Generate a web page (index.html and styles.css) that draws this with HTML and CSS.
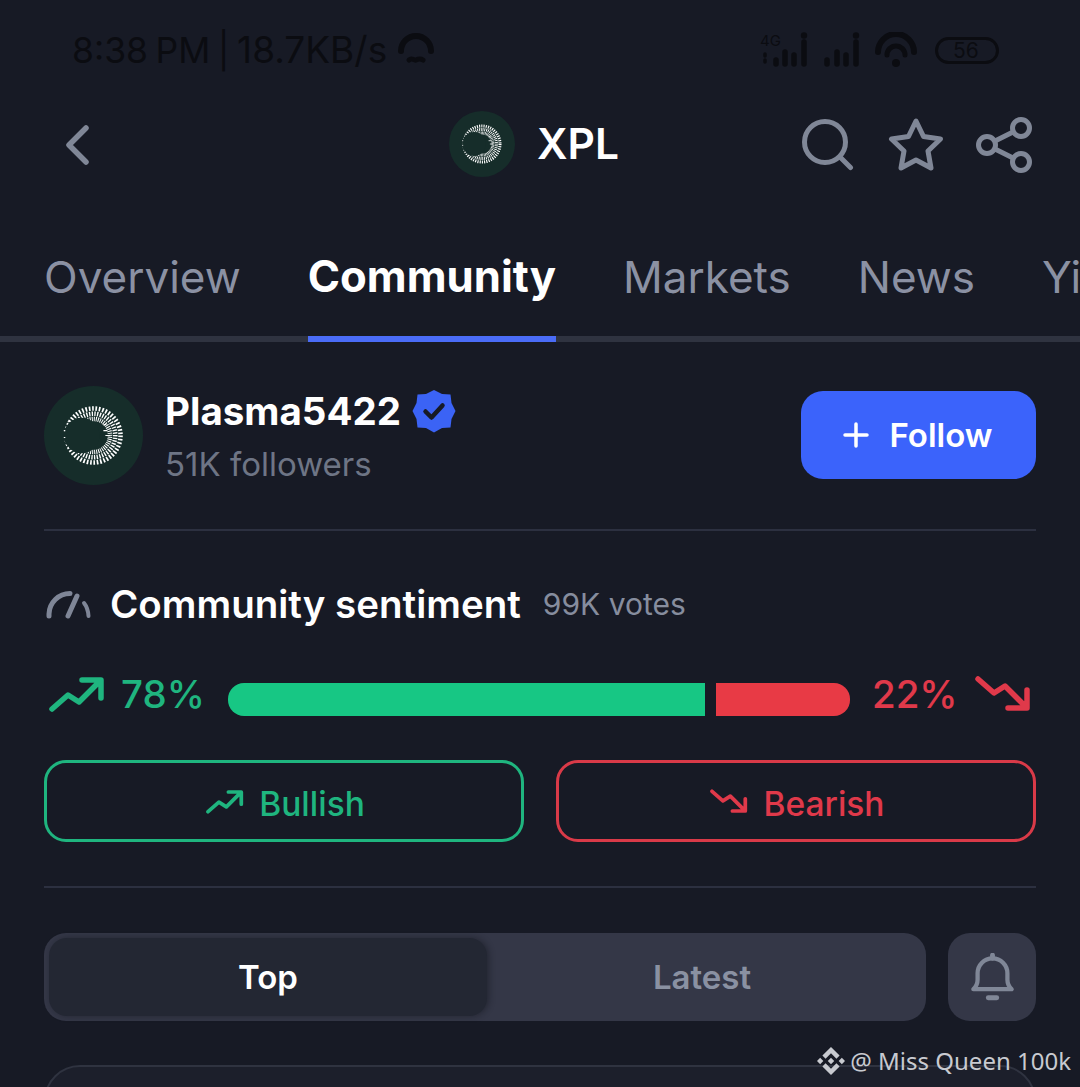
FILE: index.html
```html
<!DOCTYPE html>
<html lang="en">
<head>
<meta charset="utf-8">
<title>XPL Community</title>
<link rel="stylesheet" href="styles.css">
</head>
<body>
<svg class="defs" width="0" height="0" aria-hidden="true">
  <defs>
    <symbol id="plasma" viewBox="0 0 100 100">
      <circle cx="50" cy="50" r="50" fill="#162d2a"/>
      <g fill="none" stroke="#fff" stroke-width="4.600" stroke-dasharray="1 1">
        <circle cx="50" cy="50" r="27.300" pathLength="100"/>
        <circle cx="50" cy="50" r="22" pathLength="100" stroke-dashoffset=".35"/>
        <circle cx="50" cy="50" r="16.700" pathLength="100" stroke-dashoffset=".7"/>
      </g>
      <circle cx="38" cy="50" r="18" fill="#162d2a"/>
      <path d="M20 45h1.500M20 52h1.500M24 36h1M24 62h1M60 45h4M62 50h5M60 39h3" stroke="#fff" stroke-width="1.200"/>
    </symbol>
    <symbol id="up" viewBox="0 0 56 36">
      <path d="M3 33 L19 19 L30 26 L51 5 M33 4 H52 V22" fill="none" stroke="currentColor" stroke-width="5.500" stroke-linecap="round" stroke-linejoin="round"/>
    </symbol>
    <symbol id="down" viewBox="0 0 56 36">
      <path d="M3 3 L19 17 L30 10 L51 31 M33 32 H52 V14" fill="none" stroke="currentColor" stroke-width="5.500" stroke-linecap="round" stroke-linejoin="round"/>
    </symbol>
  </defs>
</svg>
<main class="screen">
  <div class="status">
    <div class="status-left">
      <span class="clock">8:38 PM | <span class="speed">18.7KB/s</span></span>
      <svg class="hotspot" viewBox="0 0 38 34"><path d="M4 20a15 15 0 0 1 30 0" fill="none" stroke="currentColor" stroke-width="6" stroke-linecap="round"/><path d="M12 29c3-3 5 1 7 0s4-2 7 0" fill="none" stroke="currentColor" stroke-width="5" stroke-linecap="round"/></svg>
    </div>
    <div class="status-right">
      <svg class="signal-a" viewBox="0 0 50 36"><text x="0" y="14" class="sig-text">4G</text><path d="M5 22v2M5 28v2" stroke="currentColor" stroke-width="3.500" stroke-linecap="round"/><path d="M16 32v-4M25 32v-12M34 32v-9M44 32v-22" stroke="currentColor" stroke-width="5.500" stroke-linecap="round"/><circle cx="44" cy="3.500" r="3.200" fill="currentColor"/></svg>
      <svg class="signal-b" viewBox="0 0 36 36"><path d="M3 32v-4M13 32v-12M22 32v-9M32 32v-22" stroke="currentColor" stroke-width="5.500" stroke-linecap="round"/><circle cx="32" cy="3.500" r="3.200" fill="currentColor"/></svg>
      <svg class="wifi" viewBox="0 0 44 36"><path d="M4 20a18 18 0 0 1 36 0" fill="none" stroke="currentColor" stroke-width="6" stroke-linecap="round"/><path d="M13 23a9 9 0 0 1 18 0" fill="none" stroke="currentColor" stroke-width="5" stroke-linecap="round"/><circle cx="22" cy="31" r="4" fill="currentColor"/></svg>
      <span class="battery">56</span>
    </div>
  </div>

  <header class="head">
    <svg class="back" viewBox="0 0 24 40"><path d="M21 3 L4 20 L21 37" fill="none" stroke="currentColor" stroke-width="5.500" stroke-linecap="round" stroke-linejoin="round"/></svg>
    <div class="coin">
      <svg class="coin-logo"><use href="#plasma"/></svg>
      <span class="coin-name">XPL</span>
    </div>
    <div class="head-icons">
      <svg class="ico-search" viewBox="0 0 52 52"><circle cx="23" cy="23" r="20.500" fill="none" stroke="currentColor" stroke-width="5"/><path d="M38 38l10.500 10.500" stroke="currentColor" stroke-width="5" stroke-linecap="round"/></svg>
      <svg class="ico-star" viewBox="0 0 56 56"><path d="M28 4 L35.500 19.500 L52.500 22 L40 34 L43 51 L28 43 L13 51 L16 34 L3.500 22 L20.500 19.500 Z" fill="none" stroke="currentColor" stroke-width="5" stroke-linejoin="round"/></svg>
      <svg class="ico-share" viewBox="0 0 56 56"><circle cx="45" cy="11" r="8.500" fill="none" stroke="currentColor" stroke-width="5"/><circle cx="11" cy="28" r="8.500" fill="none" stroke="currentColor" stroke-width="5"/><circle cx="45" cy="45" r="8.500" fill="none" stroke="currentColor" stroke-width="5"/><path d="M19 24L37 15M19 32L37 41" stroke="currentColor" stroke-width="5"/></svg>
    </div>
  </header>

  <nav class="tabs">
    <a class="tab">Overview</a>
    <a class="tab tab-active">Community</a>
    <a class="tab">Markets</a>
    <a class="tab">News</a>
    <a class="tab">Yield</a>
  </nav>

  <section class="content">
    <div class="profile">
      <svg class="avatar"><use href="#plasma"/></svg>
      <div class="profile-text">
        <div class="name-row">
          <span class="name">Plasma5422</span>
          <svg class="verified" viewBox="0 0 44 44"><path d="M22 1 L30 5 L38.500 5.500 L39.500 14 L43.500 22 L39.500 30 L38.500 38.500 L30 39 L22 43.500 L14 39 L5.500 38.500 L4.500 30 L.5 22 L4.500 14 L5.500 5.500 L14 5 Z" fill="#3b63f5"/><path d="M13.500 22.500 L19.500 28.500 L30.500 16.500" fill="none" stroke="#171a25" stroke-width="4.500" stroke-linecap="round" stroke-linejoin="round"/></svg>
        </div>
        <div class="followers">51K followers</div>
      </div>
      <button class="follow"><svg class="plus" viewBox="0 0 26 26"><path d="M13 2v22M2 13h22" stroke="currentColor" stroke-width="3.500" stroke-linecap="round"/></svg>Follow</button>
    </div>

    <hr class="rule rule-profile">

    <div class="sentiment-head">
      <svg class="gauge" viewBox="0 0 46 30"><path d="M3 27v-2A21 21 0 0 1 24 4.500" fill="none" stroke="#7f8697" stroke-width="5" stroke-linecap="round"/><path d="M22 27L31 7" stroke="#7f8697" stroke-width="5" stroke-linecap="round"/><path d="M38 14Q42 19 42.500 27" fill="none" stroke="#7f8697" stroke-width="4" stroke-linecap="round"/></svg>
      <h2 class="sentiment-title">Community sentiment</h2>
      <span class="votes">99K votes</span>
    </div>

    <div class="meter">
      <svg class="arrow-big up-c"><use href="#up"/></svg>
      <span class="pct up-c">78%</span>
      <div class="bar">
        <div class="bar-up"></div>
        <div class="bar-down"></div>
      </div>
      <span class="pct down-c">22%</span>
      <svg class="arrow-big down-c"><use href="#down"/></svg>
    </div>

    <div class="votes-row">
      <button class="vote vote-up"><svg class="arrow-small"><use href="#up"/></svg>Bullish</button>
      <button class="vote vote-down"><svg class="arrow-small"><use href="#down"/></svg>Bearish</button>
    </div>

    <hr class="rule rule-votes">

    <div class="filter-row">
      <div class="segment">
        <button class="seg seg-active">Top</button>
        <button class="seg">Latest</button>
      </div>
      <button class="bell-btn"><svg class="bell" viewBox="0 0 44 46"><path d="M4 34c3-3 4-5 4-9v-6a14 14 0 0 1 28 0v6c0 4 1 6 4 9z" fill="none" stroke="currentColor" stroke-width="4" stroke-linejoin="round"/><path d="M22 2v3" stroke="currentColor" stroke-width="4.500" stroke-linecap="round"/><path d="M18 42h8" stroke="currentColor" stroke-width="4.500" stroke-linecap="round"/></svg></button>
    </div>

    <div class="post-card"></div>
  </section>

  <div class="watermark">
    <svg class="bnb" viewBox="0 0 126.610 126.610"><path d="M38.730 53.200L63.300 28.630l24.600 24.600 14.300-14.300L63.300 0 24.430 38.870zM0 63.300l14.300-14.300 14.300 14.300-14.300 14.300zM38.730 73.410L63.300 97.980l24.600-24.600 14.310 14.290-38.900 38.910-38.870-38.870zM98 63.310l14.300-14.300 14.300 14.300-14.300 14.300zM77.830 63.300L63.300 48.760 48.770 63.280l14.530 14.530z" fill="currentColor"/></svg>
    <span>@ Miss Queen 100k</span>
  </div>
</main>
</body>
</html>
```
FILE: styles.css
```css
* { box-sizing: border-box; }
html, body { margin: 0; padding: 0; }
body {
  width: 1080px;
  height: 1087px;
  overflow: hidden;
  background: #171a25;
  font-family: Inter, "Liberation Sans", sans-serif;
  color: #fff;
}
.defs { position: absolute; }
.screen { position: relative; width: 1080px; height: 1087px; overflow: hidden; }

.status {
  height: 100px;
  padding: 0 81px 0 72px;
  display: flex;
  justify-content: space-between;
  align-items: center;
  color: #0b0c11;
}
.status-left { display: flex; align-items: center; gap: 10px; font-size: 35.500px; line-height: 40px; }
.clock { word-spacing: -2.500px; white-space: pre; }
.speed { font-size: 37px; }
.hotspot { width: 38px; height: 34px; margin-top: -4px; }
.status-right { display: flex; align-items: center; }
.sig-text { font-size: 15px; fill: currentColor; font-family: Inter, sans-serif; }
.signal-a { width: 50px; height: 36px; }
.signal-b { width: 36px; height: 36px; margin-left: 14px; }
.wifi { width: 44px; height: 36px; margin-left: 14px; }
.battery {
  width: 64px;
  height: 27px;
  margin-left: 17px;
  border: 3px solid currentColor;
  border-radius: 14px;
  font-size: 21px;
  line-height: 21px;
  padding-left: 15px;
}

.head {
  height: 90px;
  padding: 0 48px 0 65px;
  display: flex;
  align-items: center;
  color: #808797;
}
.back { width: 24px; height: 40px; }
.coin { display: flex; align-items: center; gap: 22px; margin: -2px 0 0 360px; }
.coin-logo { width: 66px; height: 66px; }
.coin-name { font-size: 42.500px; font-weight: 600; color: #fff; line-height: 52px; }
.head-icons { display: flex; align-items: center; margin-left: auto; }
.ico-search { width: 52px; height: 52px; }
.ico-star { width: 56px; height: 56px; margin-left: 34px; }
.ico-share { width: 56px; height: 56px; margin-left: 32px; }

.tabs {
  height: 152px;
  display: flex;
  align-items: flex-end;
  gap: 67px;
  padding-left: 44px;
  box-shadow: inset 0 -6px #2f3340;
  white-space: nowrap;
  overflow: hidden;
}
.tab {
  font-size: 44px;
  line-height: 118px;
  height: 124px;
  color: #8b91a3;
  flex: none;
}
.tab-active {
  color: #fff;
  font-size: 43.700px;
  font-weight: 700;
  border-bottom: 6px solid #4a6cf7;
}

.content { padding: 44px 44px 0; }
.profile { display: flex; align-items: center; height: 99px; }
.avatar { width: 99px; height: 99px; flex: none; }
.profile-text { margin-left: 22px; flex: 1; }
.name-row { display: flex; align-items: center; gap: 11px; height: 48px; }
.name { font-size: 38.500px; font-weight: 700; line-height: 48px; }
.verified { width: 44px; height: 44px; }
.followers { font-size: 33px; line-height: 40px; color: #6e7585; margin-top: 9px; }
.follow {
  width: 235px;
  height: 88px;
  margin-top: -2px;
  padding: 0 2px 0 0;
  border: 0;
  border-radius: 22px;
  background: #3b63fb;
  color: #fff;
  font: 600 33px Inter, sans-serif;
  display: flex;
  align-items: center;
  justify-content: center;
  gap: 21px;
}
.plus { width: 26px; height: 26px; }

.rule { border: 0; height: 2px; margin: 0; background: #2c3040; }
.rule-profile { margin-top: 44px; }

.sentiment-head { display: flex; align-items: center; margin-top: 48px; height: 50px; }
.gauge { width: 46px; height: 30px; margin-left: 2px; flex: none; }
.sentiment-title { font-size: 38.500px; font-weight: 600; margin: 0 0 0 18px; line-height: 50px; }
.votes { font-size: 30px; color: #868d9e; margin-left: 22px; }

.meter { display: flex; align-items: center; margin-top: 40px; height: 50px; }
.arrow-big { width: 56px; height: 36px; margin-left: 5px; flex: none; }
.up-c { color: #1fb57f; }
.down-c { color: #e0394a; }
.pct { font-size: 38.500px; font-weight: 500; line-height: 50px; }
.meter .up-c.pct { margin-left: 16px; }
.bar { display: flex; flex: none; height: 33px; width: 622px; margin: 10px 22px 0 23px; gap: 11px; }
.bar-up { width: 477px; background: #17c784; border-radius: 16px 0 0 16px; }
.bar-down { flex: 1; background: #e83a45; border-radius: 0 16px 16px 0; }
.meter .arrow-big.down-c { margin-left: 17px; }

.votes-row { display: flex; gap: 32px; margin-top: 41px; }
.vote {
  flex: 1;
  height: 82px;
  padding: 6px 0 0 3px;
  background: transparent;
  border: 3px solid;
  border-radius: 22px;
  font: 500 33.500px Inter, sans-serif;
  display: flex;
  align-items: center;
  justify-content: center;
  gap: 15px;
}
.vote-up { color: #1fb57f; border-color: #1fb57f; }
.vote-down { color: #e0394a; border-color: #d93a48; }
.arrow-small { width: 38px; height: 25px; margin-top: -6px; }

.rule-votes { margin-top: 44px; }

.filter-row { display: flex; gap: 22px; margin-top: 45px; height: 88px; }
.segment {
  flex: 1;
  display: flex;
  background: #343747;
  border-radius: 22px;
  padding: 5px;
}
.seg {
  flex: 1;
  border: 0;
  padding: 0 4px 0 0;
  background: transparent;
  border-radius: 18px;
  color: #8a91a2;
  font: 600 33px Inter, sans-serif;
}
.seg-active {
  flex: none;
  width: 438px;
  padding: 0;
  background: #232733;
  color: #fff;
  box-shadow: 2px 0 6px rgba(15, 17, 25, .45);
}
.bell-btn {
  width: 88px;
  border: 0;
  border-radius: 22px;
  background: #343747;
  color: #808797;
  display: flex;
  align-items: center;
  justify-content: center;
  padding: 0;
}
.bell { width: 47px; height: 49px; }

.post-card {
  height: 120px;
  margin-top: 44px;
  border: 2px solid #2f3340;
  border-radius: 36px;
  background: #1c1f2b;
}

.watermark {
  position: absolute;
  right: 9px;
  bottom: 9px;
  display: flex;
  align-items: center;
  gap: 5px;
  font-family: "Noto Sans", sans-serif;
  font-size: 24px;
  line-height: 34px;
  color: #c8cad0;
}
.bnb { width: 28px; height: 28px; }
```
